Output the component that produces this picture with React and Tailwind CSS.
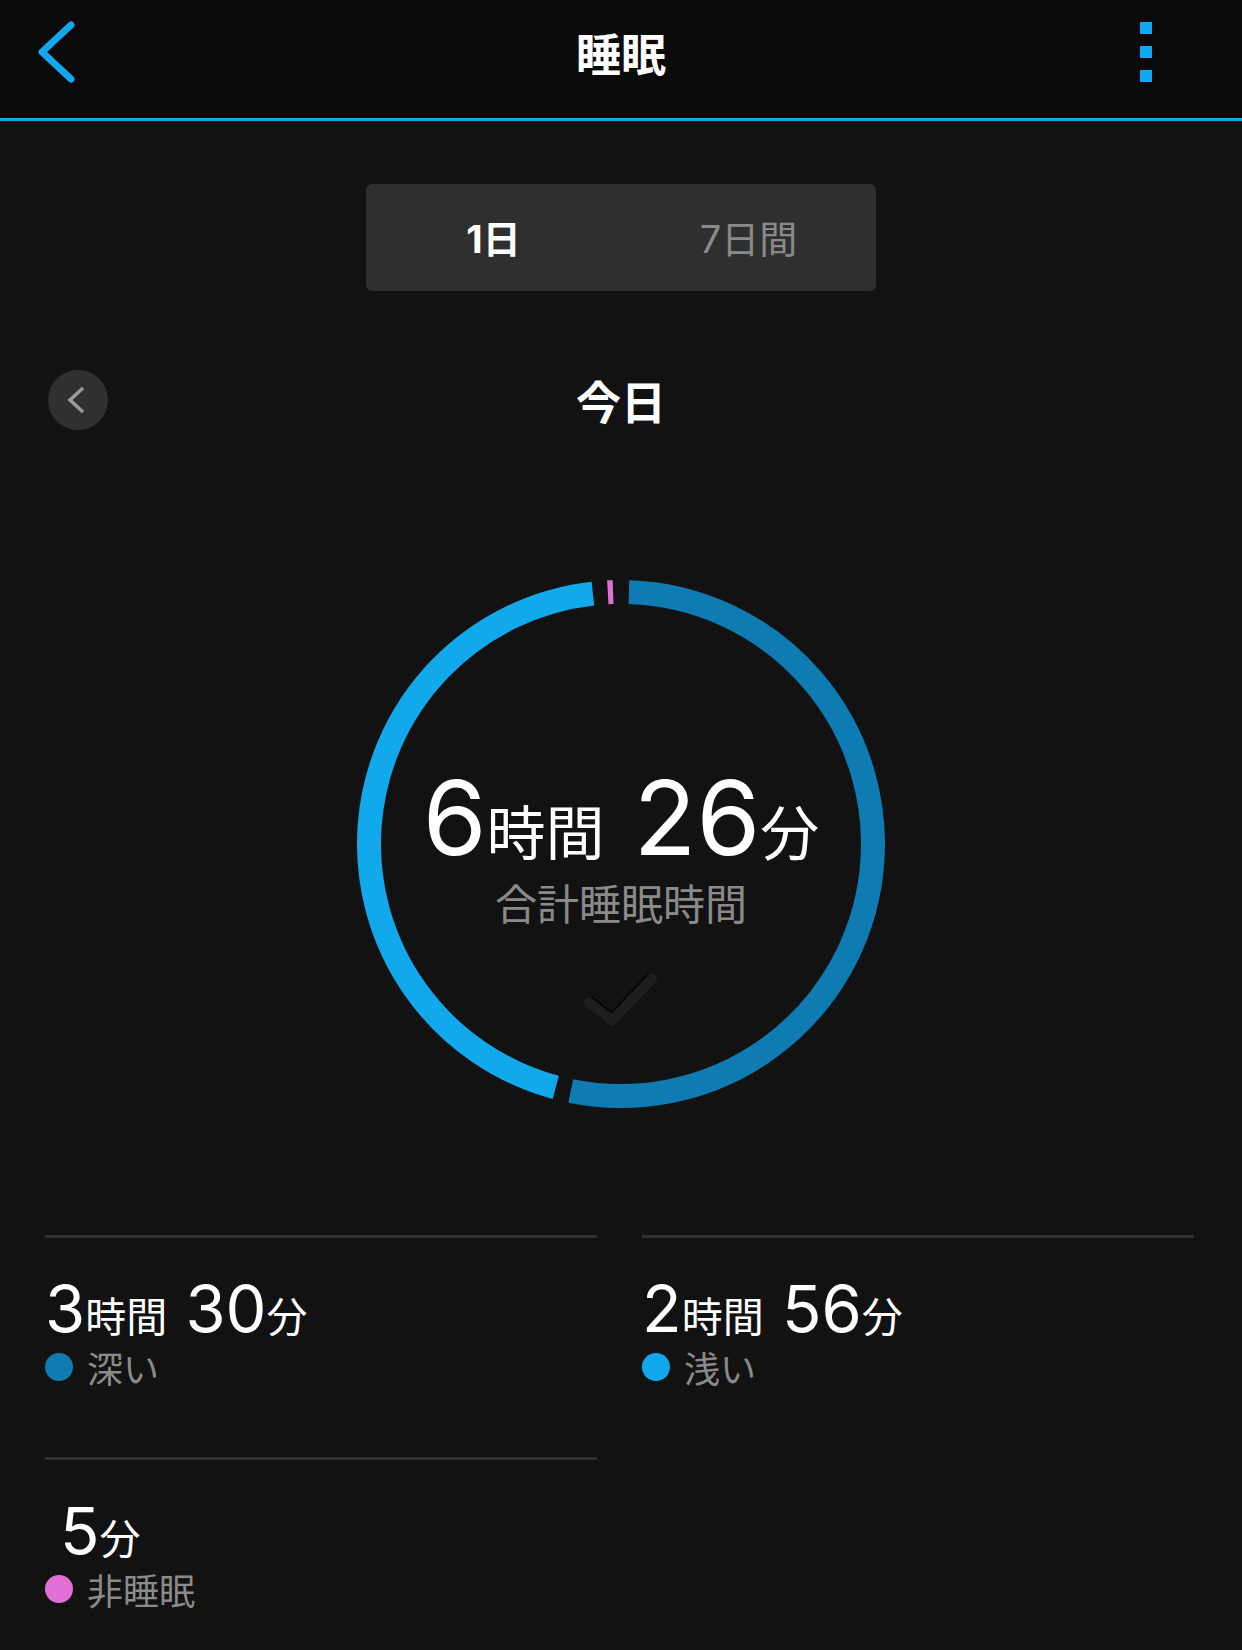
import React from 'react';

const CX = 270;
const CY = 270;
const R = 252;

// angle in degrees, clockwise from 12 o'clock
const pt = (a) => {
  const t = (a * Math.PI) / 180;
  return `${(CX + R * Math.sin(t)).toFixed(2)} ${(CY - R * Math.cos(t)).toFixed(2)}`;
};
const arc = (a1, a2) => `M ${pt(a1)} A ${R} ${R} 0 ${a2 - a1 > 180 ? 1 : 0} 1 ${pt(a2)}`;

const segments = [
  { from: 1.8, to: 191.5, color: '#0e7cb2' },
  { from: 195, to: 353.6, color: '#11a8ec' },
  { from: 357, to: 358.2, color: '#e070d6' },
];

const stats = [
  { h: 3, m: 30, label: '深い', dot: 'bg-[#0e7cb2]' },
  { h: 2, m: 56, label: '浅い', dot: 'bg-[#11a8ec]' },
  { m: 5, label: '非睡眠', dot: 'bg-[#e070d6]' },
];

const cjk = "font-['Noto_Sans_CJK_JP',sans-serif]";

const Stat = ({ h, m, label, dot }) => (
  <div className="border-t-[3px] border-[#303030] h-[222px] pt-[38px]">
    <div className={`text-[65px] leading-none text-white ${h === undefined ? 'pl-[15px]' : ''}`}>
      {h !== undefined && (
        <>
          {h}
          <span className={`${cjk} text-[41px]`}>時間</span>{' '}
        </>
      )}
      {m}
      <span className={`${cjk} text-[41px]`}>分</span>
    </div>
    <div className="flex items-center gap-[14px] mt-[8px]">
      <span className={`w-[28px] h-[28px] rounded-full ${dot}`} />
      <span className={`${cjk} text-[36px] leading-none text-[#8a8a8a]`}>{label}</span>
    </div>
  </div>
);

export default function App() {
  return (
    <div className="w-[1242px] h-[1650px] overflow-hidden bg-[#121212] font-['Inter','Noto_Sans_CJK_JP',sans-serif]">
      {/* header */}
      <header className="h-[121px] bg-[#0b0b0b] border-b-[3px] border-[#12a8ee] pb-[14px]">
        <div className="h-[104px] grid grid-cols-[1fr_auto_1fr] items-center">
          <button className="justify-self-start pl-[36px]">
            <svg width="40" height="64" viewBox="0 0 40 64" fill="none">
              <polyline points="35,5 6,32 35,59" stroke="#12a8ee" strokeWidth="7" strokeLinecap="round" strokeLinejoin="round" />
            </svg>
          </button>
          <h1 className={`${cjk} text-[45px] font-bold leading-none text-white`}>睡眠</h1>
          <div className="justify-self-end pr-[90px] flex flex-col gap-[12px]">
            <span className="w-[12px] h-[12px] bg-[#12a8ee]" />
            <span className="w-[12px] h-[12px] bg-[#12a8ee]" />
            <span className="w-[12px] h-[12px] bg-[#12a8ee]" />
          </div>
        </div>
      </header>

      {/* range tabs */}
      <div className="mt-[63px] mx-auto w-[510px] h-[107px] rounded-[6px] bg-[#2f2f2f] grid grid-cols-2 items-center text-[38px] leading-none">
        <div className="text-center text-white font-bold">
          1<span className={cjk}>日</span>
        </div>
        <div className="text-center text-[#8a8a8a]">
          7<span className={cjk}>日間</span>
        </div>
      </div>

      {/* date nav */}
      <div className="mt-[79px] h-[60px] grid grid-cols-[1fr_auto_1fr] items-center">
        <div className="pl-[48px]">
          <button className="w-[60px] h-[60px] rounded-full bg-[#303030] flex items-center justify-center">
            <svg width="60" height="60" viewBox="0 0 60 60" fill="none">
              <polyline points="35,18 22,30 35,42" stroke="#9a9a9a" strokeWidth="3.5" />
            </svg>
          </button>
        </div>
        <h2 className={`${cjk} text-[45px] font-bold leading-none text-white`}>今日</h2>
        <div />
      </div>

      {/* ring */}
      <div className="relative mt-[144px] mx-auto w-[540px] h-[540px]">
        <svg width="540" height="540" viewBox="0 0 540 540" fill="none">
          {segments.map((s) => (
            <path key={s.from} d={arc(s.from, s.to)} stroke={s.color} strokeWidth="24" />
          ))}
          <polyline points="238,426.5 261,444.5 301,402.5" stroke="#050505" strokeWidth="11" strokeLinejoin="round" />
          <polyline points="238,428.5 261,446.5 301,404.5" stroke="#1e1e1e" strokeWidth="10" strokeLinejoin="round" strokeLinecap="round" />
        </svg>
        <div className="absolute inset-0 flex flex-col items-center pt-[192px]">
          <div className="text-[103px] leading-none text-white whitespace-nowrap">
            6<span className={`${cjk} text-[59px]`}>時間</span> 26<span className={`${cjk} text-[59px]`}>分</span>
          </div>
          <div className={`${cjk} mt-[12px] text-[42px] leading-none text-[#8a8a8a]`}>合計睡眠時間</div>
        </div>
      </div>

      {/* breakdown */}
      <div className="mt-[121px] pl-[45px] pr-[48px] grid grid-cols-2 gap-x-[45px]">
        {stats.map((s) => (
          <Stat key={s.label} {...s} />
        ))}
      </div>
    </div>
  );
}
